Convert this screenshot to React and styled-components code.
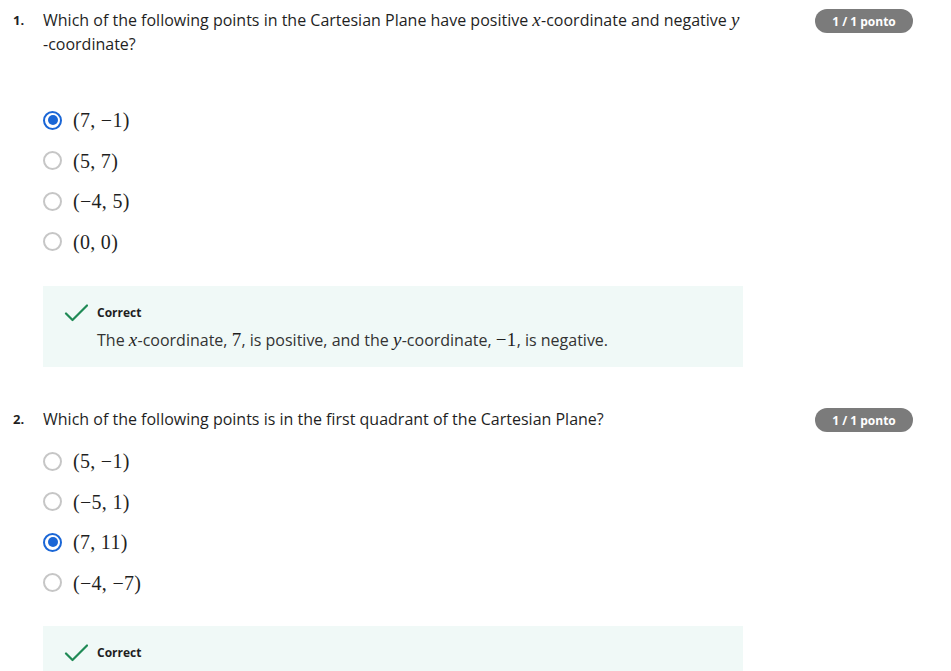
import React from "react";
import styled, { createGlobalStyle } from "styled-components";

const Global = createGlobalStyle`
  html, body { margin: 0; padding: 0; background: #ffffff; }
  body { font-family: "Open Sans", "Noto Sans", sans-serif; color: #1f1f1f; }
  * { box-sizing: border-box; }
`;

const Page = styled.div`
  width: 951px;
  padding: 8px 38px 0 13px;
  display: flex;
  flex-direction: column;
`;

const Question = styled.section`
  display: flex;
  align-items: flex-start;
  margin-bottom: ${(p) => p.$after}px;
`;

const Number = styled.div`
  width: 30px;
  flex: none;
  font-size: 13px;
  font-weight: 700;
  line-height: 24px;
  color: #1f1f1f;
`;

const Body = styled.div`
  width: 722px;
  flex: none;
`;

const Prompt = styled.div`
  font-size: 16px;
  line-height: 24px;
  color: #1f1f1f;
  margin-bottom: ${(p) => p.$gap}px;
`;

const Spacer = styled.div`
  flex: 1;
`;

const Badge = styled.div`
  flex: none;
  margin-top: 1px;
  height: 24px;
  width: 98px;
  border-radius: 12px;
  background: #7b7b7b;
  color: #ffffff;
  font-size: 12px;
  font-weight: 700;
  display: flex;
  align-items: center;
  justify-content: center;
`;

const Options = styled.div`
  display: flex;
  flex-direction: column;
`;

const Option = styled.label`
  height: 40.5px;
  display: flex;
  align-items: center;
  gap: 11px;
`;

const Radio = styled.span`
  width: 19px;
  height: 19px;
  border-radius: 50%;
  flex: none;
  border: 2px solid ${(p) => (p.$checked ? "#1a66d6" : "#c6c6c6")};
  display: flex;
  align-items: center;
  justify-content: center;
  &::after {
    content: "";
    display: ${(p) => (p.$checked ? "block" : "none")};
    width: 10px;
    height: 10px;
    border-radius: 50%;
    background: #1a66d6;
  }
`;

const Math = styled.span`
  font-family: "Liberation Serif", "DejaVu Serif", serif;
  font-size: ${(p) => (p.$inline ? 19 : 20)}px;
  line-height: 16px;
  letter-spacing: 0.3px;
  color: #1f1f1f;
  font-style: ${(p) => (p.$italic ? "italic" : "normal")};
`;

const Feedback = styled.div`
  margin-top: ${(p) => p.$top}px;
  width: 700px;
  background: #f0f9f7;
  padding: 18px 0 15px 21px;
  display: flex;
  gap: 9px;
`;

const CheckIcon = styled.svg`
  width: 24px;
  height: 24px;
  flex: none;
  margin-top: -3px;
`;

const FeedbackText = styled.div`
  display: flex;
  flex-direction: column;
  gap: 6px;
`;

const Verdict = styled.div`
  font-size: 12px;
  font-weight: 700;
  line-height: 18px;
  color: #1f1f1f;
`;

const Explanation = styled.div`
  font-size: 16px;
  line-height: 24px;
  color: #333333;
`;

const Check = () => (
  <CheckIcon viewBox="0 0 24 24" fill="none">
    <path d="M2 12.5 L8.5 19 L23 4.5" stroke="#1f8a55" strokeWidth="2.2" strokeLinecap="round" strokeLinejoin="round" />
  </CheckIcon>
);

const MINUS = "\u2212";

const q1Options = [
  { text: `(7, ${MINUS}1)`, checked: true },
  { text: "(5, 7)" },
  { text: `(${MINUS}4, 5)` },
  { text: "(0, 0)" },
];

const q2Options = [
  { text: `(5, ${MINUS}1)` },
  { text: `(${MINUS}5, 1)` },
  { text: "(7, 11)", checked: true },
  { text: `(${MINUS}4, ${MINUS}7)` },
];

const OptionList = ({ items }) => (
  <Options>
    {items.map((o) => (
      <Option key={o.text}>
        <Radio $checked={o.checked} />
        <Math>{o.text}</Math>
      </Option>
    ))}
  </Options>
);

export default function App() {
  return (
    <>
      <Global />
      <Page>
        <Question $after={40}>
          <Number>1.</Number>
          <Body>
            <Prompt $gap={44}>
              Which of the following points in the Cartesian Plane have positive <Math $inline $italic>x</Math>-coordinate and negative <Math $inline $italic>y</Math>
              <br />-coordinate?
            </Prompt>
            <OptionList items={q1Options} />
            <Feedback $top={24}>
              <Check />
              <FeedbackText>
                <Verdict>Correct</Verdict>
                <Explanation>
                  The <Math $inline $italic>x</Math>-coordinate, <Math $inline>7</Math>, is positive, and the <Math $inline $italic>y</Math>-coordinate, <Math $inline>{MINUS}1</Math>, is negative.
                </Explanation>
              </FeedbackText>
            </Feedback>
          </Body>
          <Spacer />
          <Badge>1 / 1 ponto</Badge>
        </Question>
        <Question $after={0}>
          <Number>2.</Number>
          <Body>
            <Prompt $gap={10}>
              Which of the following points is in the first quadrant of the Cartesian Plane?
            </Prompt>
            <OptionList items={q2Options} />
            <Feedback $top={23}>
              <Check />
              <FeedbackText>
                <Verdict>Correct</Verdict>
              </FeedbackText>
            </Feedback>
          </Body>
          <Spacer />
          <Badge>1 / 1 ponto</Badge>
        </Question>
      </Page>
    </>
  );
}
